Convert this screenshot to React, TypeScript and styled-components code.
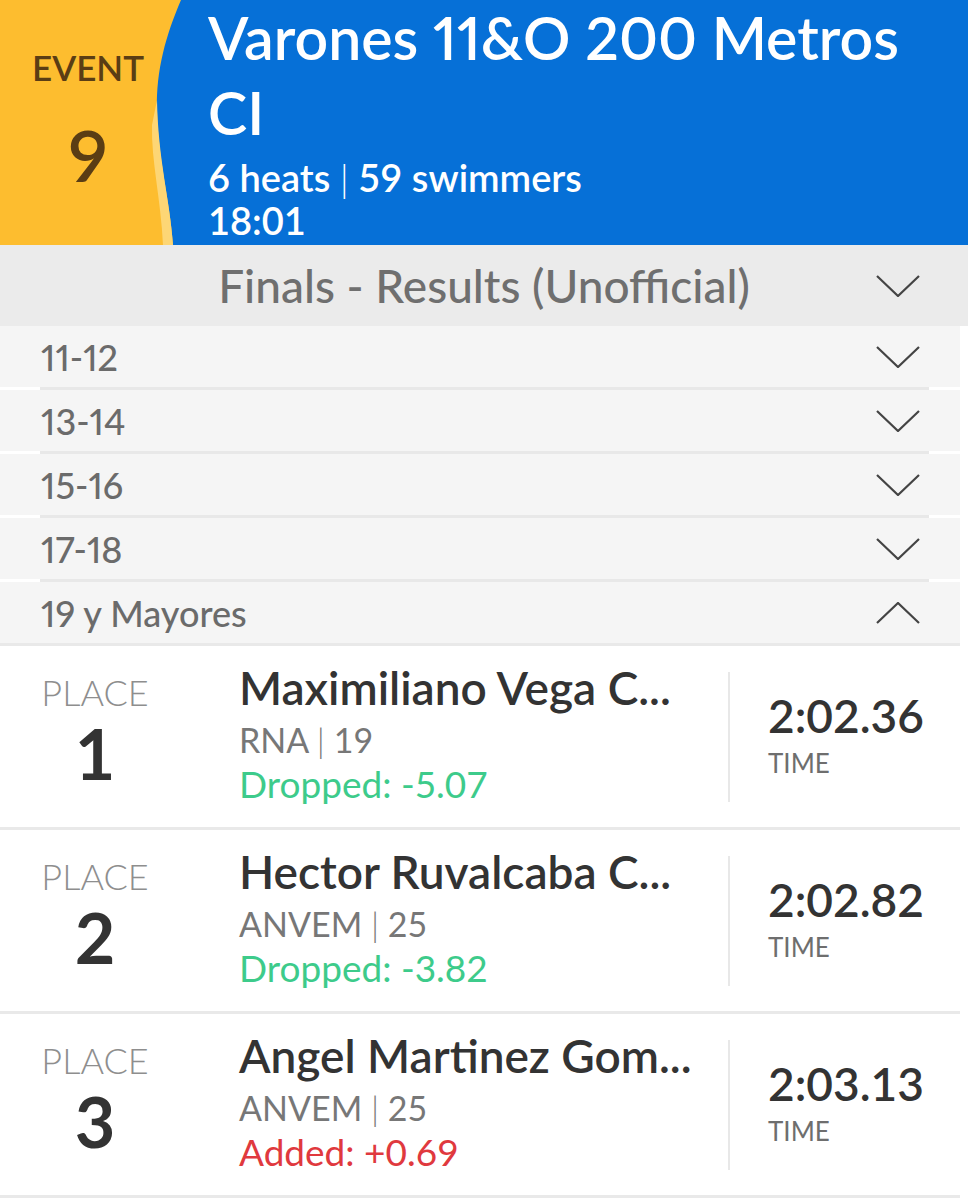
import React from 'react';
import styled, { createGlobalStyle } from 'styled-components';

const GlobalStyle = createGlobalStyle`
  body {
    margin: 0;
    background: #ffffff;
    font-family: Lato, "Open Sans", sans-serif;
    -webkit-font-smoothing: antialiased;
  }
`;

const Page = styled.div`
  width: 968px;
`;

const Header = styled.header`
  display: flex;
  height: 245px;
  background: #0670d7;
`;

const Badge = styled.div`
  position: relative;
  width: 176px;
  flex-shrink: 0;
  display: flex;
  flex-direction: column;
  align-items: center;
  color: #5a3d14;
`;

const BadgeShape = styled.svg`
  position: absolute;
  top: 0;
  left: 0;
  width: 184px;
  height: 245px;
`;

const BadgeLabel = styled.div`
  position: relative;
  margin-top: 49px;
  font-size: 35px;
  line-height: 36px;
  font-weight: 600;
`;

const BadgeNumber = styled.div`
  position: relative;
  margin-top: 35px;
  font-size: 71px;
  line-height: 70px;
  font-weight: 600;
`;

const EventInfo = styled.div`
  flex: 1;
  padding: 0 40px 0 32px;
  color: #ffffff;
`;

const EventTitle = styled.h1`
  margin: 0;
  font-size: 59px;
  line-height: 75px;
  font-weight: 600;
  font-variant-numeric: proportional-nums;
`;

const EventMeta = styled.div<{ $first?: boolean }>`
  margin-top: ${({ $first }) => ($first ? '6px' : '0')};
  font-size: 38px;
  line-height: 43px;
  font-weight: 600;
`;

const Pipe = styled.span`
  font-weight: 300;
`;

const FinalsBar = styled.div`
  display: grid;
  grid-template-columns: 1fr auto 1fr;
  align-items: center;
  height: 81px;
  background: #ebebeb;
`;

const FinalsTitle = styled.div`
  grid-column: 2;
  font-size: 46px;
  color: #6f6f6f;
  font-weight: 500;
`;

const FinalsToggle = styled.div`
  justify-self: end;
  margin-right: 48px;
  display: flex;
`;

const AgeList = styled.div`
  width: 960px;
`;

const AgeRow = styled.div`
  display: flex;
  align-items: center;
  justify-content: space-between;
  height: 61px;
  padding: 0 40px 0 41px;
  background: #f5f5f5;
  font-size: 36px;
  font-weight: 500;
  color: #6b6b6b;
  font-variant-numeric: proportional-nums;
`;

const AgeDivider = styled.div`
  height: 3px;
  padding: 0 31px 0 40px;
  background: #ffffff;

  &::before {
    content: '';
    display: block;
    height: 100%;
    background: #e8e8e8;
  }
`;

const ResultCard = styled.div<{ $first?: boolean }>`
  display: grid;
  grid-template-columns: 190px 1fr 2px 230px;
  align-items: start;
  width: 960px;
  height: 181px;
  border-top: ${({ $first }) => ($first ? '3px solid #e9e9e9' : 'none')};
  border-bottom: 3px solid #e9e9e9;
  background: #ffffff;
`;

const PlaceCol = styled.div`
  display: flex;
  flex-direction: column;
  align-items: center;
  padding-top: 26px;
`;

const PlaceLabel = styled.div`
  font-size: 36px;
  line-height: 40px;
  font-weight: 300;
  color: #8e8e8e;
`;

const PlaceNumber = styled.div`
  margin-top: 6px;
  font-size: 70px;
  line-height: 70px;
  font-weight: 700;
  color: #333333;
`;

const SwimmerCol = styled.div`
  padding: 18px 0 0 49px;
  min-width: 0;
`;

const SwimmerName = styled.div`
  font-size: 46px;
  line-height: 48px;
  font-weight: 600;
  color: #333333;
  white-space: nowrap;
`;

const SwimmerTeam = styled.div`
  font-size: 34px;
  line-height: 56px;
  color: #777777;
`;

const Delta = styled.div<{ $added: boolean }>`
  font-size: 37px;
  line-height: 32px;
  color: ${({ $added }) => ($added ? '#e0393e' : '#3dcb8b')};
`;

const ColDivider = styled.div`
  align-self: center;
  height: 130px;
  background: #e8e8e8;
`;

const TimeCol = styled.div`
  padding: 45px 0 0 38px;
`;

const TimeValue = styled.div`
  font-size: 46px;
  line-height: 50px;
  font-weight: 600;
  color: #333333;
`;

const TimeLabel = styled.div`
  margin-top: 7px;
  font-size: 26px;
  line-height: 30px;
  color: #6e6e6e;
`;

const Chevron = ({ up }: { up?: boolean }) => (
  <svg width="44" height="22" viewBox="0 0 44 22">
    <polyline
      points={up ? '1,21 22,1 43,21' : '1,1 22,21 43,1'}
      fill="none"
      stroke="#444444"
      strokeWidth="2.2"
    />
  </svg>
);

const ageGroups = ['11-12', '13-14', '15-16', '17-18', '19 y Mayores'];

const results = [
  { place: 1, name: 'Maximiliano Vega C...', team: 'RNA', age: 19, delta: 'Dropped: -5.07', added: false, time: '2:02.36' },
  { place: 2, name: 'Hector Ruvalcaba C...', team: 'ANVEM', age: 25, delta: 'Dropped: -3.82', added: false, time: '2:02.82' },
  { place: 3, name: 'Angel Martinez Gom...', team: 'ANVEM', age: 25, delta: 'Added: +0.69', added: true, time: '2:03.13' },
];

export default function App() {
  return (
    <Page>
      <GlobalStyle />
      <Header>
        <Badge>
          <BadgeShape viewBox="0 0 184 245">
            <path d="M0 0 H181 C166 35 156 70 157 110 C158 160 170 200 173 245 H0 Z" fill="#fdbd2f" />
            <path d="M157 100 C158 160 170 200 173 245 H163 C161 200 151 160 152 125 Z" fill="#fdd675" />
          </BadgeShape>
          <BadgeLabel>EVENT</BadgeLabel>
          <BadgeNumber>9</BadgeNumber>
        </Badge>
        <EventInfo>
          <EventTitle>Varones 11&amp;O 200 Metros CI</EventTitle>
          <EventMeta $first>
            6 heats <Pipe>|</Pipe> 59 swimmers
          </EventMeta>
          <EventMeta>18:01</EventMeta>
        </EventInfo>
      </Header>

      <FinalsBar>
        <FinalsTitle>Finals - Results (Unofficial)</FinalsTitle>
        <FinalsToggle>
          <Chevron />
        </FinalsToggle>
      </FinalsBar>

      <AgeList>
        {ageGroups.map((group, i) => (
          <React.Fragment key={group}>
            {i > 0 && <AgeDivider />}
            <AgeRow>
              {group}
              <Chevron up={i === ageGroups.length - 1} />
            </AgeRow>
          </React.Fragment>
        ))}
      </AgeList>

      {results.map((r, i) => (
        <ResultCard key={r.place} $first={i === 0}>
          <PlaceCol>
            <PlaceLabel>PLACE</PlaceLabel>
            <PlaceNumber>{r.place}</PlaceNumber>
          </PlaceCol>
          <SwimmerCol>
            <SwimmerName>{r.name}</SwimmerName>
            <SwimmerTeam>
              {r.team} <Pipe>|</Pipe> {r.age}
            </SwimmerTeam>
            <Delta $added={r.added}>{r.delta}</Delta>
          </SwimmerCol>
          <ColDivider />
          <TimeCol>
            <TimeValue>{r.time}</TimeValue>
            <TimeLabel>TIME</TimeLabel>
          </TimeCol>
        </ResultCard>
      ))}
    </Page>
  );
}
